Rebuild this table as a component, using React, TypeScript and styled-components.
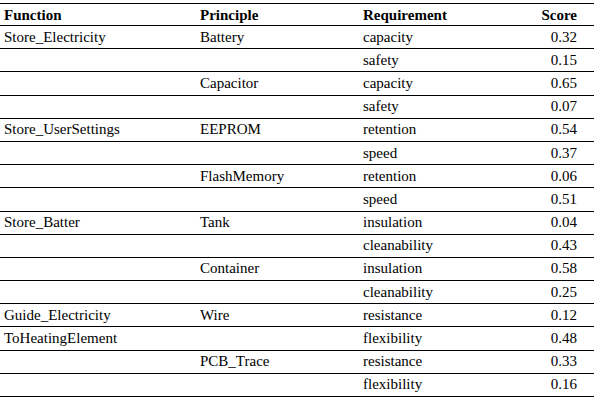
import React from 'react';
import styled, { createGlobalStyle } from 'styled-components';

type Row = {
  fn?: string;
  principle?: string;
  requirement: string;
  score: string;
};

const rows: Row[] = [
  { fn: 'Store_Electricity', principle: 'Battery', requirement: 'capacity', score: '0.32' },
  { requirement: 'safety', score: '0.15' },
  { principle: 'Capacitor', requirement: 'capacity', score: '0.65' },
  { requirement: 'safety', score: '0.07' },
  { fn: 'Store_UserSettings', principle: 'EEPROM', requirement: 'retention', score: '0.54' },
  { requirement: 'speed', score: '0.37' },
  { principle: 'FlashMemory', requirement: 'retention', score: '0.06' },
  { requirement: 'speed', score: '0.51' },
  { fn: 'Store_Batter', principle: 'Tank', requirement: 'insulation', score: '0.04' },
  { requirement: 'cleanability', score: '0.43' },
  { principle: 'Container', requirement: 'insulation', score: '0.58' },
  { requirement: 'cleanability', score: '0.25' },
  { fn: 'Guide_Electricity', principle: 'Wire', requirement: 'resistance', score: '0.12' },
  { fn: 'ToHeatingElement', requirement: 'flexibility', score: '0.48' },
  { principle: 'PCB_Trace', requirement: 'resistance', score: '0.33' },
  { requirement: 'flexibility', score: '0.16' },
];

const serif = `"Liberation Serif", "Times New Roman", Times, serif`;

const GlobalStyle = createGlobalStyle`
  html, body {
    margin: 0;
    padding: 0;
    background: #ffffff;
  }
  body {
    font-family: ${serif};
    color: #000000;
  }
`;

const Page = styled.div`
  width: 594px;
  padding-top: 3px;
`;

const Table = styled.table`
  width: 100%;
  border-collapse: collapse;
  table-layout: fixed;
  font-family: ${serif};
  font-size: 15px;
  color: #000000;
`;

const HeadRow = styled.tr`
  height: 22px;
  border-top: 1px solid #000;
  border-bottom: 1px solid #000;
`;

const BodyRow = styled.tr`
  height: 23.2px;
  border-bottom: 1px solid #000;
`;

const Th = styled.th<{ $right?: boolean }>`
  font-family: ${serif};
  font-weight: bold;
  text-align: ${(p) => (p.$right ? 'right' : 'left')};
  padding: 1px ${(p) => (p.$right ? '17px' : '0')} 0 4px;
  line-height: 17px;
`;

const Td = styled.td<{ $right?: boolean }>`
  font-family: ${serif};
  text-align: ${(p) => (p.$right ? 'right' : 'left')};
  padding: 0 ${(p) => (p.$right ? '17px' : '0')} 0 4px;
  line-height: 17px;
  white-space: nowrap;
`;

export default function App() {
  return (
    <>
      <GlobalStyle />
      <Page>
        <Table>
          <colgroup>
            <col style={{ width: 196 }} />
            <col style={{ width: 163 }} />
            <col style={{ width: 161 }} />
            <col />
          </colgroup>
          <thead>
            <HeadRow>
              <Th>Function</Th>
              <Th>Principle</Th>
              <Th>Requirement</Th>
              <Th $right>Score</Th>
            </HeadRow>
          </thead>
          <tbody>
            {rows.map((r, i) => (
              <BodyRow key={i}>
                <Td>{r.fn ?? ''}</Td>
                <Td>{r.principle ?? ''}</Td>
                <Td>{r.requirement}</Td>
                <Td $right>{r.score}</Td>
              </BodyRow>
            ))}
          </tbody>
        </Table>
      </Page>
    </>
  );
}
